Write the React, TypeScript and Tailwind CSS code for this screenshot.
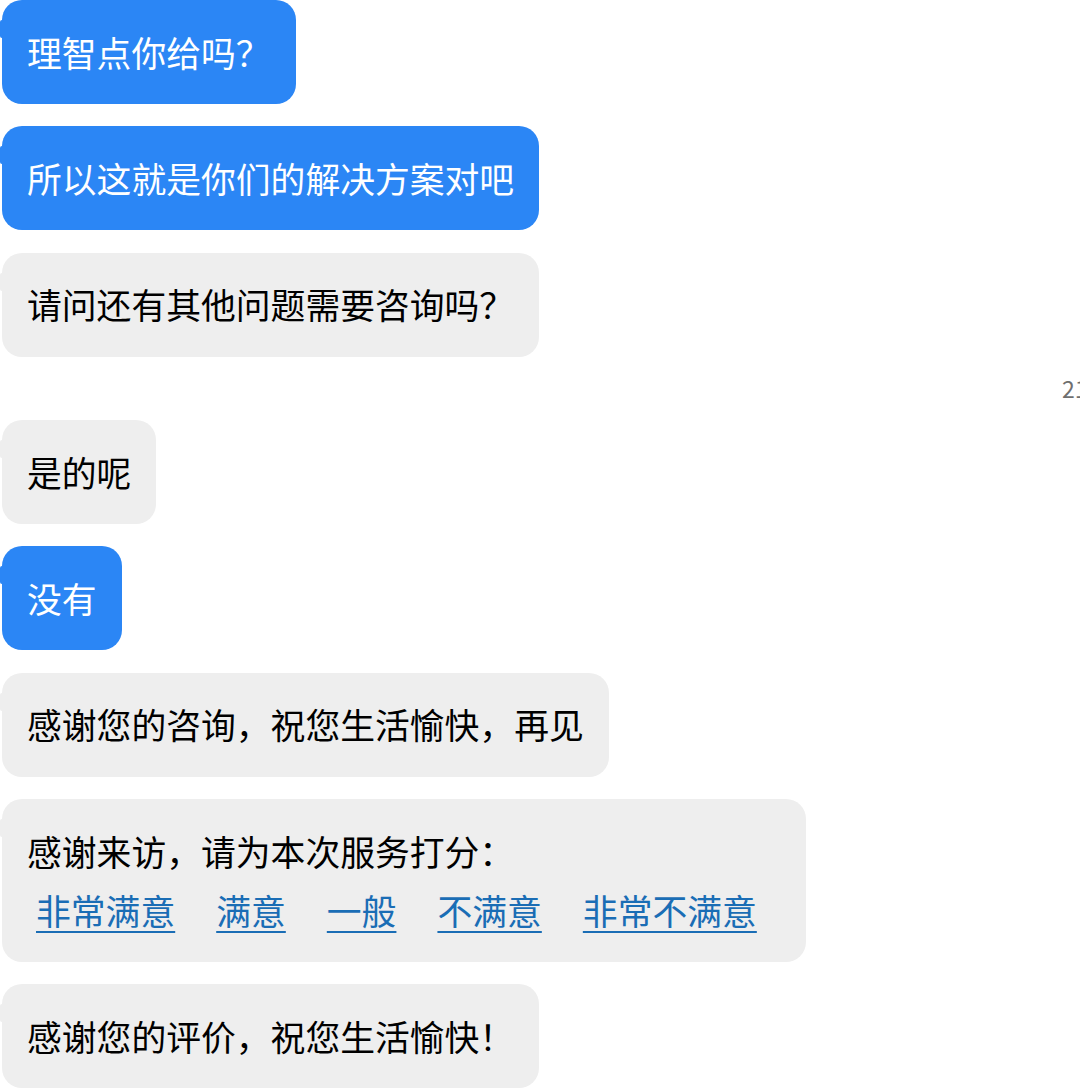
import React from "react";

const font = { fontFamily: '"Noto Sans CJK SC", "Noto Sans", sans-serif' };

function Bubble({
  blue,
  children,
}: {
  blue?: boolean;
  children: React.ReactNode;
}) {
  return (
    <div className="flex pl-[2px]">
      <div
        className={
          "relative rounded-[20px] px-[25px] py-[22.5px] text-[34.8px] leading-[59px] whitespace-nowrap " +
          (blue ? "bg-[#2b86f5] text-white" : "bg-[#eeeeee] text-black")
        }
      >
        <div
          className={
            "absolute left-[-2px] top-[20px] h-[18px] w-[4px] rounded-l-[2px] " +
            (blue ? "bg-[#2b86f5]" : "bg-[#eeeeee]")
          }
        />
        {children}
      </div>
    </div>
  );
}

export default function App() {
  const links = ["非常满意", "满意", "一般", "不满意", "非常不满意"];
  return (
    <div
      className="w-[1080px] h-[1092px] overflow-hidden bg-white flex flex-col gap-[22.3px]"
      style={font}
    >
      <Bubble blue>理智点你给吗？</Bubble>
      <Bubble blue>所以这就是你们的解决方案对吧</Bubble>
      <Bubble>请问还有其他问题需要咨询吗？</Bubble>
      <div className="h-[19px] flex items-center pl-[1062px] overflow-hidden whitespace-nowrap text-[23px] leading-[19px] text-[#6f6f6f]">
        21:35
      </div>
      <Bubble>是的呢</Bubble>
      <Bubble blue>没有</Bubble>
      <Bubble>感谢您的咨询，祝您生活愉快，再见</Bubble>
      <Bubble>
        <div>感谢来访，请为本次服务打分：</div>
        <div className="flex gap-[41px] pl-[9px] pr-[24px]">
          {links.map((l) => (
            <a
              key={l}
              href="#"
              className="text-[#1a6db5] underline underline-offset-[6px] decoration-[2px]"
            >
              {l}
            </a>
          ))}
        </div>
      </Bubble>
      <Bubble>感谢您的评价，祝您生活愉快！</Bubble>
    </div>
  );
}
